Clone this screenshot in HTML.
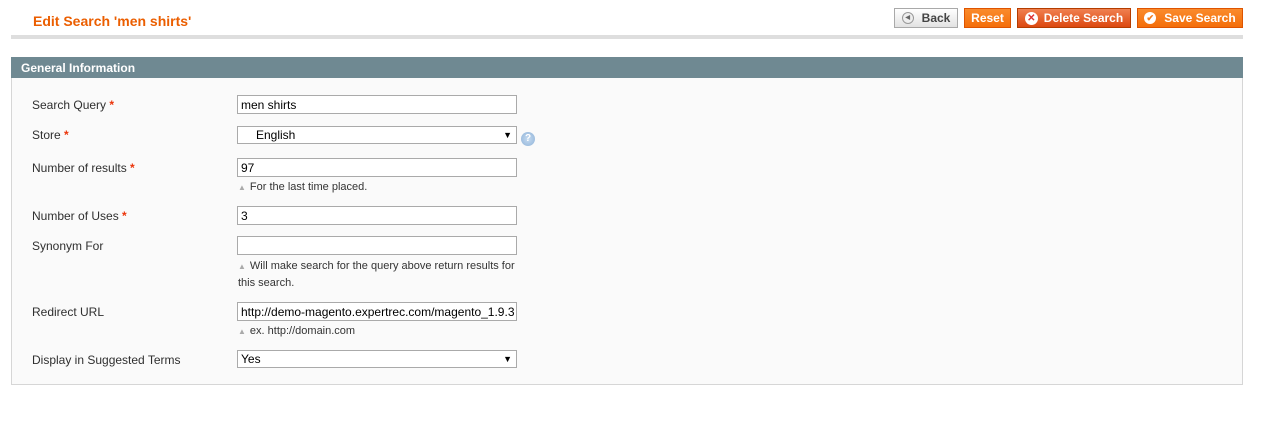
<!DOCTYPE html>
<html><head><style>
*{box-sizing:border-box;margin:0;padding:0}
body{width:1262px;height:442px;background:#fff;font-family:"Liberation Sans",Arial,sans-serif;font-size:12px;color:#2f2f2f;position:relative;overflow:hidden}
.a{position:absolute}
h3{position:absolute;left:33px;top:13px;font-size:14px;color:#eb5e00;font-weight:bold}
.line{left:11px;top:35px;width:1232px;height:4px;background:#dedede}
.btn{position:absolute;top:8px;height:20px;border:1px solid #de5400;background:linear-gradient(#fa8b2c,#f46e0a);color:#fff;font-weight:bold;font-size:12px;display:flex;align-items:center;justify-content:center}
.ic{display:inline-block;border-radius:50%;text-align:center;margin-right:6px;flex:none}
.back{border-color:#a9a9a9;background:linear-gradient(#fff,#e2e2e2);color:#444}
.del{border-color:#b43c00;background:linear-gradient(#f08050,#dc4810)}
.hd{left:11px;top:57px;width:1232px;height:21px;background:#6f8992;color:#fff;font-weight:bold;padding-left:10px;line-height:22px}
.panel{left:11px;top:78px;width:1232px;height:307px;background:#fafafa;border:1px solid #d6d6d6;border-top:none}
.lb{position:absolute;left:32px}
.lb b{color:#eb340a}
.in{position:absolute;left:237px;width:280px;height:19px;border:1px solid #aaa;background:#fff;padding-left:3px;line-height:18px;color:#000}
.sel::after{content:"▼";position:absolute;right:4px;top:0;font-size:9px}
.nt{position:absolute;left:238px;font-size:11px;color:#333;line-height:17px}
.nt i{color:#aaa;font-style:normal;font-size:8px;margin-right:4px}
</style></head><body>
<h3>Edit Search 'men shirts'</h3>
<div class="a line"></div>
<div class="btn back" style="left:894px;width:64px"><span class="ic" style="width:12px;height:12px;border:1px solid #999;background:#eee;font-size:6px;line-height:10px;color:#666;margin-right:8px">◀</span>Back</div>
<div class="btn" style="left:964px;width:47px">Reset</div>
<div class="btn del" style="left:1017px;width:114px"><span class="ic" style="width:13px;height:13px;background:#fff;color:#d33;font-size:10px;line-height:13px">✕</span>Delete Search</div>
<div class="btn" style="left:1137px;width:106px"><span class="ic" style="width:12px;height:12px;background:#fff;color:#f47a1a;font-size:9px;line-height:12px;margin-right:8px">✔</span>Save Search</div>
<div class="a hd">General Information</div>
<div class="a panel"></div>
<div class="lb" style="top:98px">Search Query <b>*</b></div>
<div class="in" style="top:95px">men shirts</div>
<div class="lb" style="top:128px">Store <b>*</b></div>
<div class="in sel" style="top:126px;height:18px;line-height:17px;padding-left:18px">English</div>
<div class="a" style="left:521px;top:132px;width:14px;height:14px;border-radius:50%;background:radial-gradient(#c5dbf0,#8fb2d8);color:#fff;font-size:10px;font-weight:bold;text-align:center;line-height:14px">?</div>
<div class="lb" style="top:161px">Number of results <b>*</b></div>
<div class="in" style="top:158px">97</div>
<div class="nt" style="top:179px"><i>▲</i>For the last time placed.</div>
<div class="lb" style="top:209px">Number of Uses <b>*</b></div>
<div class="in" style="top:206px">3</div>
<div class="lb" style="top:239px">Synonym For</div>
<div class="in" style="top:236px"></div>
<div class="nt" style="top:258px;width:285px"><i>▲</i>Will make search for the query above return results for<br>this search.</div>
<div class="lb" style="top:305px">Redirect URL</div>
<div class="in" style="top:302px;overflow:hidden;white-space:nowrap">http://demo-magento.expertrec.com/magento_1.9.3</div>
<div class="nt" style="top:323px"><i>▲</i>ex. http://domain.com</div>
<div class="lb" style="top:353px">Display in Suggested Terms</div>
<div class="in sel" style="top:350px;height:18px;line-height:17px">Yes</div>
</body></html>
